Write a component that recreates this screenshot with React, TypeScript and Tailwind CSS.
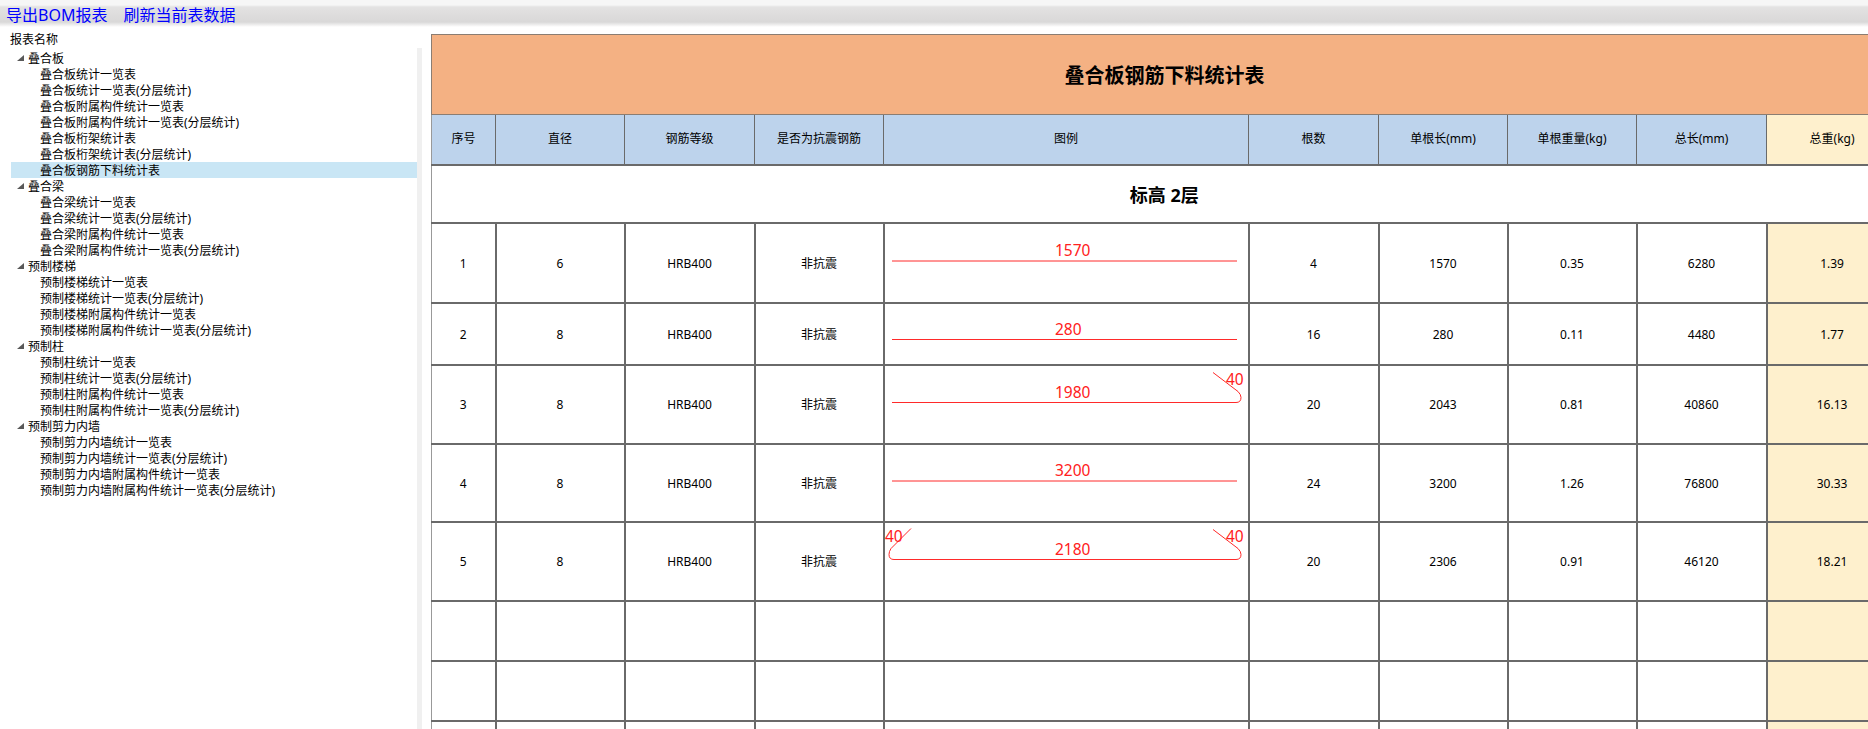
const tree = [
  {
    name: '叠合板',
    items: ['叠合板统计一览表', '叠合板统计一览表(分层统计)', '叠合板附属构件统计一览表', '叠合板附属构件统计一览表(分层统计)', '叠合板桁架统计表', '叠合板桁架统计表(分层统计)', '叠合板钢筋下料统计表'],
  },
  {
    name: '叠合梁',
    items: ['叠合梁统计一览表', '叠合梁统计一览表(分层统计)', '叠合梁附属构件统计一览表', '叠合梁附属构件统计一览表(分层统计)'],
  },
  {
    name: '预制楼梯',
    items: ['预制楼梯统计一览表', '预制楼梯统计一览表(分层统计)', '预制楼梯附属构件统计一览表', '预制楼梯附属构件统计一览表(分层统计)'],
  },
  {
    name: '预制柱',
    items: ['预制柱统计一览表', '预制柱统计一览表(分层统计)', '预制柱附属构件统计一览表', '预制柱附属构件统计一览表(分层统计)'],
  },
  {
    name: '预制剪力内墙',
    items: ['预制剪力内墙统计一览表', '预制剪力内墙统计一览表(分层统计)', '预制剪力内墙附属构件统计一览表', '预制剪力内墙附属构件统计一览表(分层统计)'],
  },
]

const heads = ['序号', '直径', '钢筋等级', '是否为抗震钢筋', '图例', '根数', '单根长(mm)', '单根重量(kg)', '总长(mm)']
const widths = [64, 129, 130, 129, 365, 130, 129, 129, 130, 131]

const rows = [
  { h: 80, no: 1, d: 6, label: '1570', lineY: 37, count: 4, len: 1570, unit: '0.35', total: 6280, weight: '1.39', hooks: 0 },
  { h: 62, no: 2, d: 8, label: '280', lineY: 35.5, count: 16, len: 280, unit: '0.11', total: 4480, weight: '1.77', hooks: 0 },
  { h: 79, no: 3, d: 8, label: '1980', lineY: 36.5, count: 20, len: 2043, unit: '0.81', total: 40860, weight: '16.13', hooks: 1 },
  { h: 78, no: 4, d: 8, label: '3200', lineY: 36, count: 24, len: 3200, unit: '1.26', total: 76800, weight: '30.33', hooks: 0 },
  { h: 79, no: 5, d: 8, label: '2180', lineY: 36.5, count: 20, len: 2306, unit: '0.91', total: 46120, weight: '18.21', hooks: 2 },
]

const head = 'border border-[#6a6a6a] p-0 text-center align-middle'
const cell = 'border-2 border-[#6a6a6a] p-0 text-center align-middle'
const td = `${cell} pt-[2px]`
const first = 'border-l border-l-[#999999]'

function Rebar({ h, label, lineY: y, hooks }: { h: number; label: string; lineY: number; hooks: number }) {
  const right = `H351Q356 ${y} 356 ${y - 5}Q356 ${y - 8} 353 ${y - 11}L328 ${y - 30}`
  return (
    <svg width="363" height={h - 2} className="block overflow-visible" fill="none" stroke="#ff2a2a" strokeWidth="1">
      {hooks === 0 && <path d={`M7 ${y}H352`} />}
      {hooks === 1 && <path d={`M7 ${y}${right}`} />}
      {hooks === 2 && <path d={`M26 ${y - 31}L6 ${y - 11}Q4 ${y - 8} 4 ${y - 5}Q4 ${y} 9 ${y}${right}`} />}
      <g fill="#ff2020" stroke="none" fontSize="15.5">
        <text x="170" y={y - 5}>{label}</text>
        {hooks >= 1 && <text x="341" y={y - 18}>40</text>}
        {hooks === 2 && <text x="0" y={y - 18}>40</text>}
      </g>
    </svg>
  )
}

export default function App() {
  return (
    <div className="h-[729px] w-[1868px] overflow-hidden bg-white text-[12px] leading-4 text-black font-['Noto_Sans','Noto_Sans_CJK_SC',sans-serif]">
      <div className="flex h-[27px] items-center gap-4 pl-[6px] pt-[3px] text-[16px] text-[#0000ff] bg-[linear-gradient(to_bottom,#f6f6f6_0px,#f6f6f6_5px,#e3e2e2_7px,#d9d8d8_22px,#ffffff_27px)]">
        <a>导出BOM报表</a>
        <a>刷新当前表数据</a>
      </div>

      <div className="flex h-[702px]">
        <div className="w-[431px] shrink-0 pt-1">
          <div className="h-4 pl-[10px] leading-[18px]">报表名称</div>
          <div className="mt-px flex h-full pl-[11px]">
            <div className="w-[406px] pt-[2px]">
              {tree.map((group) => (
                <div key={group.name}>
                  <div className="flex h-4 items-center gap-1 pl-[6px]">
                    <svg width="7" height="6" className="mb-px" viewBox="0 0 7 6">
                      <path d="M7 0V6H0Z" fill="#595959" />
                    </svg>
                    <span className="h-4 leading-[18px]">{group.name}</span>
                  </div>
                  {group.items.map((item) => (
                    <div key={item} className={`h-4 pl-[29px] leading-[18px] ${item === '叠合板钢筋下料统计表' ? 'bg-[#c9e6f5]' : ''}`}>
                      {item}
                    </div>
                  ))}
                </div>
              ))}
            </div>
            <div className="w-[5px] bg-[#f0f0f0]" />
          </div>
        </div>

        <div className="min-w-0 flex-1 overflow-hidden pt-[7px]">
          <table className="w-[1466px] table-fixed border-collapse">
            <colgroup>
              {widths.map((w, i) => (
                <col key={i} style={{ width: w }} />
              ))}
            </colgroup>
            <tbody>
              <tr className="h-[80px]">
                <td colSpan={10} className="border border-[#8b7d72] bg-[#f4b183] pt-[2px] text-center align-middle text-[20px] font-bold">
                  叠合板钢筋下料统计表
                </td>
              </tr>
              <tr className="h-[50px]">
                {heads.map((text, i) => (
                  <td key={text} className={`${head} bg-[#bdd3ec] ${i === 0 ? first : ''}`}>{text}</td>
                ))}
                <td className={`${head} bg-[#fef0cd]`}>总重(kg)</td>
              </tr>
              <tr className="h-[58px]">
                <td colSpan={10} className={`${td} ${first} text-[18px] font-bold`}>
                  标高 2层
                </td>
              </tr>
              {rows.map((row) => (
                <tr key={row.no} style={{ height: row.h }}>
                  <td className={`${td} ${first}`}>{row.no}</td>
                  <td className={td}>{row.d}</td>
                  <td className={td}>HRB400</td>
                  <td className={td}>非抗震</td>
                  <td className={cell}>
                    <Rebar h={row.h} label={row.label} lineY={row.lineY} hooks={row.hooks} />
                  </td>
                  <td className={td}>{row.count}</td>
                  <td className={td}>{row.len}</td>
                  <td className={td}>{row.unit}</td>
                  <td className={td}>{row.total}</td>
                  <td className={`${td} bg-[#fef0cd]`}>{row.weight}</td>
                </tr>
              ))}
              {[0, 1, 2].map((i) => (
                <tr key={i} className="h-[60px]">
                  {widths.map((w, j) => (
                    <td key={j} className={`${cell} ${j === 0 ? first : ''} ${j === 9 ? 'bg-[#fef0cd]' : ''}`} />
                  ))}
                </tr>
              ))}
            </tbody>
          </table>
        </div>
      </div>
    </div>
  )
}
